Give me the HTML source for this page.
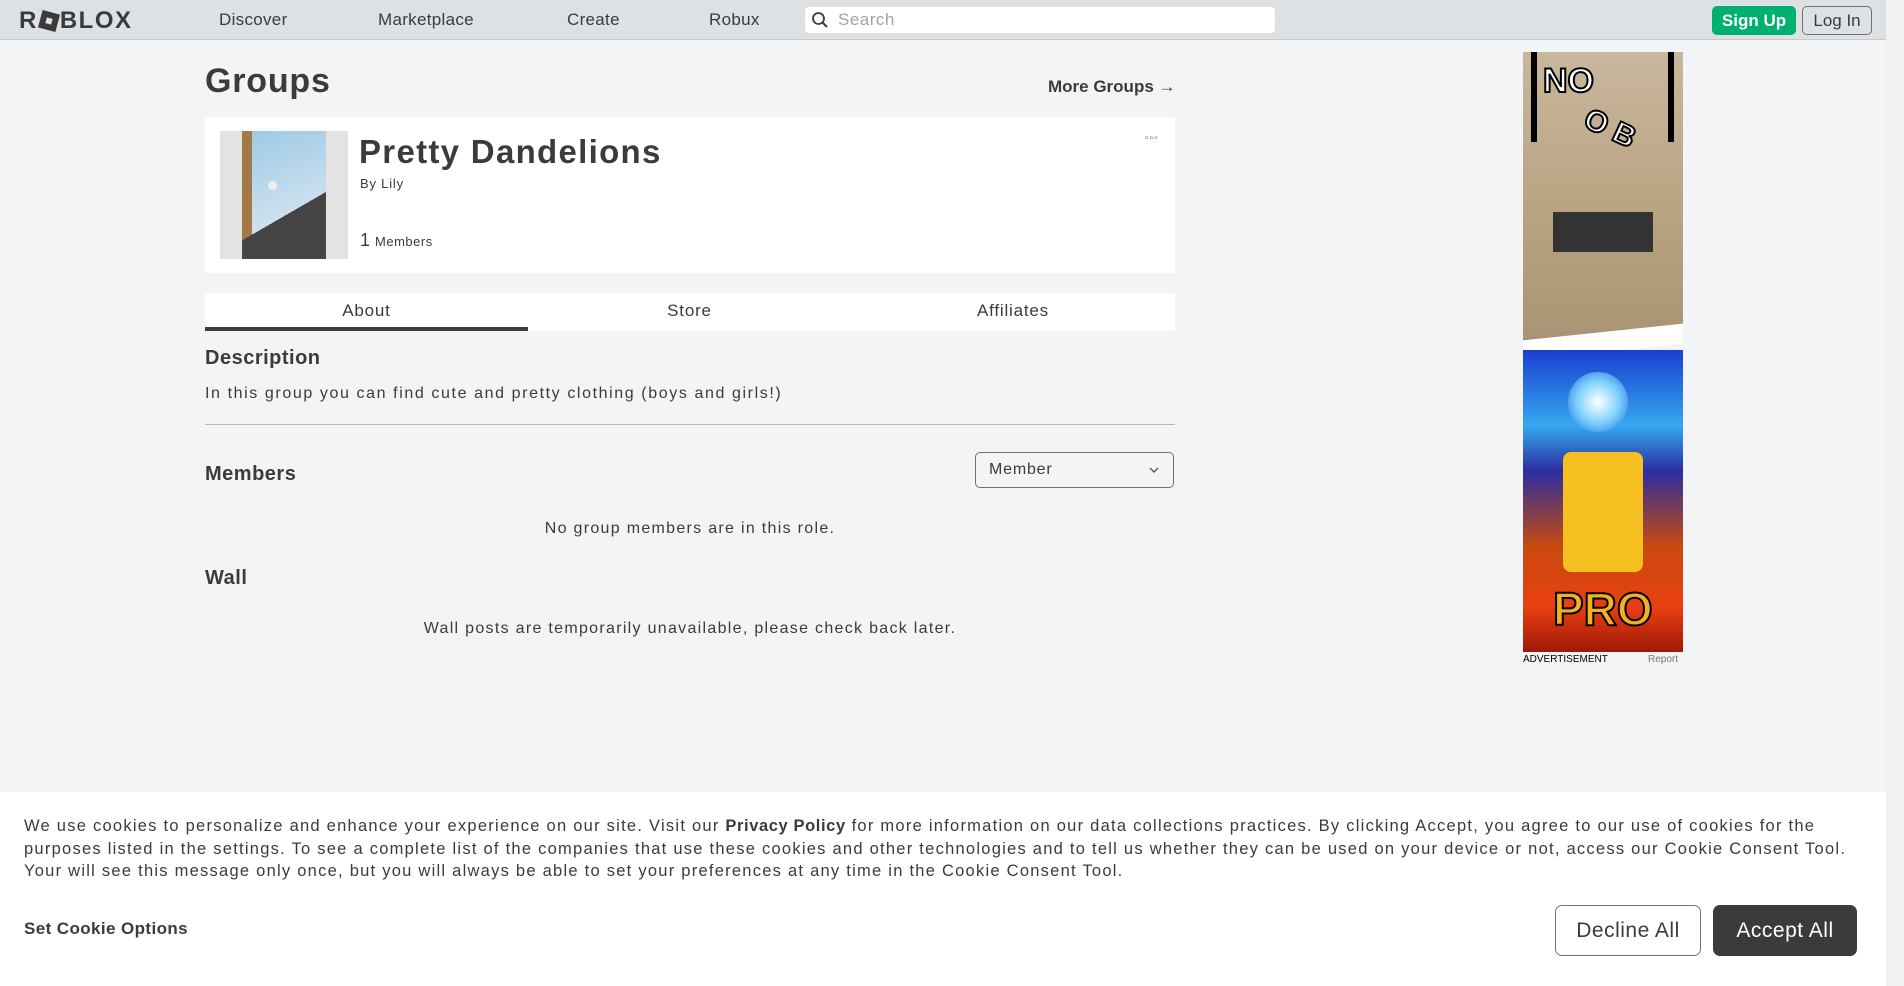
<!DOCTYPE html>
<html><head><meta charset="utf-8"><style>
*{margin:0;padding:0;box-sizing:border-box}
body{width:1904px;height:986px;background:#f2f4f5;font-family:"Liberation Sans",sans-serif;color:#393b3d;position:relative;overflow:hidden}
.abs{position:absolute}
.nav{left:0;top:0;width:1886px;height:40px;background:#dee1e3;border-bottom:1px solid #c8cbce}
.nav .l{font-size:17px;color:#393b3d;top:10px;letter-spacing:0.3px}
.scroll{left:1886px;top:0;width:18px;height:986px;background:#f1f1f1}
.card{background:#fff}
h2{font-size:20px;font-weight:bold;letter-spacing:0.5px}
.body{font-size:16px;letter-spacing:1.3px}
</style></head><body>
<div class="abs nav">
  <div class="abs" style="left:19px;top:7px;font-size:24px;font-weight:900;letter-spacing:1.5px;color:#393b3d">R<span style="display:inline-block;width:18px;height:18px;background:#393b3d;transform:rotate(15deg);position:relative;top:2px;margin:0 2px"><span style="position:absolute;left:6px;top:6px;width:6px;height:6px;background:#dee1e3"></span></span>BLOX</div>
  <div class="abs l" style="left:219px">Discover</div>
  <div class="abs l" style="left:378px">Marketplace</div>
  <div class="abs l" style="left:567px">Create</div>
  <div class="abs l" style="left:709px">Robux</div>
  <div class="abs" style="left:805px;top:7px;width:470px;height:26px;background:#fff;border-radius:4px">
    <svg class="abs" style="left:6px;top:4px" width="18" height="18" viewBox="0 0 18 18"><circle cx="7.5" cy="7.5" r="5.5" fill="none" stroke="#393b3d" stroke-width="1.8"/><path d="M11.5 11.5L16 16" stroke="#393b3d" stroke-width="2"/></svg>
    <div class="abs" style="left:33px;top:3px;font-size:17px;color:#a0a3a6;letter-spacing:0.5px">Search</div>
  </div>
  <div class="abs" style="left:1712px;top:6px;width:84px;height:29px;background:#00b06f;border-radius:5px;color:#fff;font-size:17px;font-weight:bold;text-align:center;line-height:29px">Sign Up</div>
  <div class="abs" style="left:1802px;top:6px;width:70px;height:29px;border:1px solid #6f7275;border-radius:5px;font-size:17px;text-align:center;line-height:27px">Log In</div>
</div>
<div class="abs scroll"></div>

<div class="abs" style="left:205px;top:62px;font-size:34px;font-weight:bold;letter-spacing:0.8px">Groups</div>
<div class="abs" style="left:1048px;top:77px;font-size:17px;font-weight:bold;color:#393b3d">More Groups →</div>

<div class="abs card" style="left:205px;top:117px;width:970px;height:156px">
  <div class="abs" style="left:15px;top:14px;width:128px;height:128px;background:#e3e3e3">
    <div class="abs" style="left:22px;top:0;width:84px;height:128px;background:linear-gradient(160deg,#9cc9e6,#e9eef3)"></div>
    <div class="abs" style="left:22px;top:0;width:10px;height:128px;background:#a47948"></div>
    <div class="abs" style="left:22px;top:0;width:84px;height:128px;background:linear-gradient(150deg,transparent 62%,#444 62%)"></div>
    <div class="abs" style="left:48px;top:50px;width:9px;height:9px;border-radius:50%;background:#f2eee8"></div>
  </div>
  <div class="abs" style="left:154px;top:16px;font-size:33px;font-weight:bold;color:#393b3d;letter-spacing:1.3px">Pretty Dandelions</div>
  <div class="abs" style="left:155px;top:59px;font-size:13px;letter-spacing:0.8px">By Lily</div>
  <div class="abs" style="left:155px;top:113px;font-size:18px">1 <span style="font-size:13px;letter-spacing:0.5px">Members</span></div>
  <div class="abs" style="left:940px;top:16px;font-size:10px;letter-spacing:1px;color:#666">▫▫▫</div>
</div>

<div class="abs card" style="left:205px;top:293px;width:970px;height:38px">
  <div class="abs" style="left:0;width:323px;top:8px;text-align:center;font-size:17px;letter-spacing:0.8px">About</div>
  <div class="abs" style="left:323px;width:323px;top:8px;text-align:center;font-size:17px;letter-spacing:0.8px">Store</div>
  <div class="abs" style="left:646px;width:324px;top:8px;text-align:center;font-size:17px;letter-spacing:0.8px">Affiliates</div>
  <div class="abs" style="left:0;top:34px;width:323px;height:4px;background:#393b3d"></div>
</div>

<h2 class="abs" style="left:205px;top:347px">Description</h2>
<div class="abs body" style="left:205px;top:385px;letter-spacing:1.6px">In this group you can find cute and pretty clothing (boys and girls!)</div>
<div class="abs" style="left:205px;top:424px;width:970px;height:1px;background:#b8b8b8"></div>
<h2 class="abs" style="left:205px;top:463px">Members</h2>
<div class="abs" style="left:975px;top:452px;width:199px;height:36px;border:1px solid #6f7275;border-radius:5px;background:#f2f4f5">
  <div class="abs" style="left:13px;top:8px;font-size:16px;letter-spacing:0.8px">Member</div>
  <svg class="abs" style="left:173px;top:14px" width="10" height="7"><path d="M1 1l4 4 4-4" fill="none" stroke="#393b3d" stroke-width="1.2"/></svg>
</div>
<div class="abs body" style="left:205px;width:970px;top:520px;text-align:center">No group members are in this role.</div>
<h2 class="abs" style="left:205px;top:567px">Wall</h2>
<div class="abs body" style="left:205px;width:970px;top:620px;text-align:center">Wall posts are temporarily unavailable, please check back later.</div>

<div class="abs" style="left:1523px;top:52px;width:160px;height:600px;overflow:hidden">
  <div class="abs" style="left:0;top:0;width:160px;height:290px;background:linear-gradient(#c9b79d,#b7a27f 60%,#a89474)"></div>
  <div class="abs" style="left:8px;top:0;width:6px;height:90px;background:#000"></div>
  <div class="abs" style="left:145px;top:0;width:6px;height:90px;background:#000"></div>
  <div class="abs" style="left:20px;top:10px;font-size:34px;font-weight:900;color:#fff;-webkit-text-stroke:2px #000">NO</div>
  <div class="abs" style="left:60px;top:60px;font-size:30px;font-weight:900;color:#fff;-webkit-text-stroke:2px #000;transform:rotate(25deg)">O B</div>
  <div class="abs" style="left:30px;top:160px;width:100px;height:40px;background:#333"></div>
  <div class="abs" style="left:0;top:280px;width:160px;height:20px;background:#fff;transform:skewY(-6deg)"></div>
  <div class="abs" style="left:0;top:298px;width:160px;height:302px;background:linear-gradient(#1a3fd0,#35a8f0 25%,#2a2ea0 40%,#c84a10 65%,#e84010 85%,#a01808)"></div>
  <div class="abs" style="left:45px;top:320px;width:60px;height:60px;border-radius:50%;background:radial-gradient(#fff,#7cd0ff 50%,#1a60d0)"></div>
  <div class="abs" style="left:40px;top:400px;width:80px;height:120px;background:#f5c020;border-radius:8px"></div>
  <div class="abs" style="left:30px;top:530px;font-size:46px;font-weight:900;color:#f5b020;-webkit-text-stroke:2px #000">PRO</div>
</div>
<div class="abs" style="left:1523px;top:654px;font-size:10px;color:#000">ADVERTISEMENT</div>
<div class="abs" style="left:1648px;top:654px;font-size:10px;color:#777">Report</div>

<div class="abs" style="left:0;top:792px;width:1886px;height:194px;background:#fff">
  <div class="abs" style="left:24px;top:23px;white-space:nowrap;font-size:16.5px;line-height:22.5px;color:#393b3d;letter-spacing:1.25px">We use cookies to personalize and enhance your experience on our site. Visit our <b style="letter-spacing:0.6px">Privacy Policy</b> for more information on our data collections practices. By clicking Accept, you agree to our use of cookies for the<br>purposes listed in the settings. To see a complete list of the companies that use these cookies and other technologies and to tell us whether they can be used on your device or not, access our Cookie Consent Tool.<br>Your will see this message only once, but you will always be able to set your preferences at any time in the Cookie Consent Tool.</div>
  <div class="abs" style="left:24px;top:127px;font-size:17px;font-weight:bold;letter-spacing:0.4px">Set Cookie Options</div>
  <div class="abs" style="left:1555px;top:113px;width:146px;height:51px;border:1px solid #6f7275;border-radius:7px;font-size:21px;text-align:center;line-height:49px;letter-spacing:0.5px">Decline All</div>
  <div class="abs" style="left:1713px;top:113px;width:144px;height:51px;background:#393b3d;border-radius:7px;color:#fff;font-size:21px;text-align:center;line-height:51px;letter-spacing:0.5px">Accept All</div>
</div>
</body></html>
